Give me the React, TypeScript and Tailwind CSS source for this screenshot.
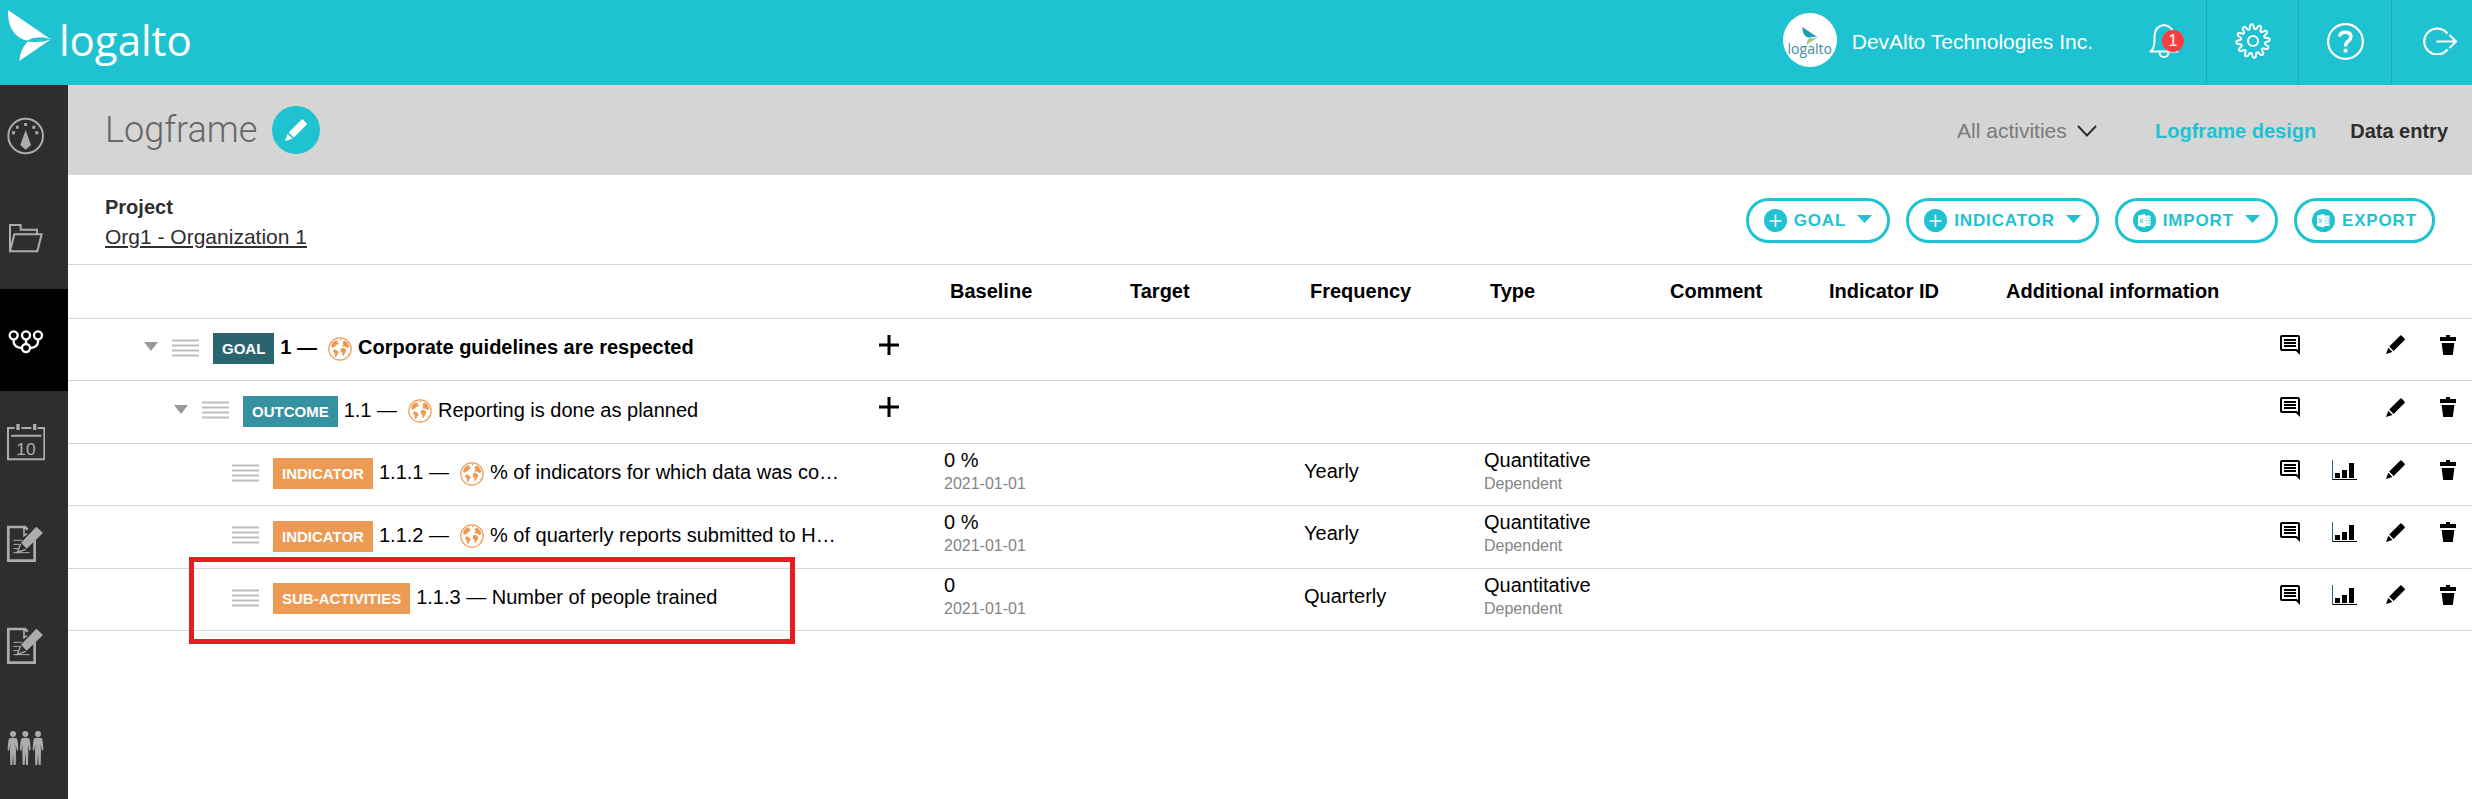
import { Fragment, type ReactNode } from 'react';

type Row = {
  level: 0 | 1 | 2;
  badge: string;
  badgeColor: string;
  code: string;
  title: string;
  global?: boolean;
  indicator?: { baseline: string; frequency: string };
  highlighted?: boolean;
};

const rows: Row[] = [
  {
    level: 0,
    badge: 'GOAL',
    badgeColor: 'bg-[#2a656f]',
    code: '1',
    title: 'Corporate guidelines are respected',
    global: true,
  },
  {
    level: 1,
    badge: 'OUTCOME',
    badgeColor: 'bg-[#3692a0]',
    code: '1.1',
    title: 'Reporting is done as planned',
    global: true,
  },
  {
    level: 2,
    badge: 'INDICATOR',
    badgeColor: 'bg-[#ed9b54]',
    code: '1.1.1',
    title: '% of indicators for which data was co…',
    global: true,
    indicator: { baseline: '0 %', frequency: 'Yearly' },
  },
  {
    level: 2,
    badge: 'INDICATOR',
    badgeColor: 'bg-[#ed9b54]',
    code: '1.1.2',
    title: '% of quarterly reports submitted to H…',
    global: true,
    indicator: { baseline: '0 %', frequency: 'Yearly' },
  },
  {
    level: 2,
    badge: 'SUB-ACTIVITIES',
    badgeColor: 'bg-[#ed9b54]',
    code: '1.1.3',
    title: 'Number of people trained',
    indicator: { baseline: '0', frequency: 'Quarterly' },
    highlighted: true,
  },
];

const indent = ['pl-[76px]', 'pl-[106px]', 'pl-[164px]'];

/* ---------- Icons ---------- */

const Bird = ({ className, top, bottom }: { className: string; top: string; bottom: string }) => (
  <svg className={className} viewBox="0 0 130 154">
    <path d="M0 0L129 88Q90 75 58 92C22 86 -2 52 0 0Z" fill={top} />
    <path d="M129 89L34 154Q37 118 60 95Q96 101 129 89Z" fill={bottom} />
  </svg>
);

const PencilIcon = ({ className }: { className: string }) => (
  <svg className={className} viewBox="0 0 19 19" fill="currentColor">
    <path d="M3.2 11.6L14.4 0.4Q15 0 15.5 0.5L18.7 3.8Q19 4.4 18.6 4.9L7.6 15.9Z" />
    <path d="M2.3 12.7L6.5 17L0 19Z" />
  </svg>
);

const TrashIcon = () => (
  <svg className="h-5 w-4" viewBox="0 0 16 20" fill="currentColor">
    <path d="M0 2H6V0H10V2H16V6H0Z" />
    <path d="M1.6 8H14.4L12.8 20H3.2Z" />
  </svg>
);

const CommentIcon = () => (
  <svg className="size-5" viewBox="2 2 20 20" fill="currentColor">
    <path d="M21.99 4c0-1.1-.89-2-1.99-2H4c-1.1 0-2 .9-2 2v12c0 1.1.9 2 2 2h14l4 4-.01-18zM20 4v13.17L18.83 16H4V4h16zM6 12h12v2H6zm0-3h12v2H6zm0-3h12v2H6z" />
  </svg>
);

const ChartIcon = () => (
  <svg className="h-5 w-[26px]" viewBox="0 0 26 20" fill="currentColor">
    <path d="M0 0H1V19H25V20H0Z" fill="#33617f" />
    <path d="M1 19H25V20H1ZM3 13H8V18H3ZM10 10H15V18H10ZM17 3H22V18H17Z" />
  </svg>
);

const PlusIcon = () => (
  <svg className="size-5" viewBox="0 0 20 20" fill="currentColor">
    <path d="M8.5 0H11.5V8.5H20V11.5H11.5V20H8.5V11.5H0V8.5H8.5Z" />
  </svg>
);

const GlobeIcon = () => (
  <svg className="size-6 shrink-0" viewBox="0 0 24 24" fill="#ed9b54">
    <circle cx="12" cy="12" r="11.2" fill="none" stroke="#ed9b54" strokeWidth="1.2" />
    <path d="M3.8 6.6L5.6 4.4L8.4 3.2L10 4.2L9 5.4L11 5.6L10.4 7.2L8.4 7.8L7.4 9.6L5.8 9.8L5 11L3 9.6Z" />
    <path d="M5.4 12.8L7.4 12.6L10.4 14.6L10.6 16L9.2 17.4L8.6 19.4L7.6 20.6L6.8 18.4L6.6 16.2L5 14.6Z" />
    <path d="M14.6 5.4L16 3.6L18.6 4.6L21 8L21.4 10.6L20.2 10.2L19.6 11.6L18.2 10L16.2 9.6L14 9.4L15.4 7.6Z" />
    <path d="M12.8 11.8L14.6 10.8L17.2 11.4L18.4 13.4L17.6 15.4L16.4 17L15.6 19L14.4 18.4L14.4 15.8L12.8 14.8Z" />
    <path d="M11.6 2L13.8 2.2L12.6 3.8ZM19.4 17L20.6 15.4L20.2 18Z" />
  </svg>
);

const Caret = ({ className }: { className: string }) => (
  <svg className={className} viewBox="0 0 14 8" preserveAspectRatio="none" fill="currentColor">
    <path d="M0 0H14L7 8Z" />
  </svg>
);

const PlusCircle = () => (
  <svg className="size-[23px]" viewBox="0 0 23 23">
    <circle cx="11.5" cy="11.5" r="11.5" fill="currentColor" />
    <path d="M11.5 5.5V18M5.5 12H17.5" stroke="#fff" strokeWidth="1.6" />
  </svg>
);

const ExcelCircle = () => (
  <svg className="size-[23px]" viewBox="0 0 23 23">
    <circle cx="11.5" cy="11.5" r="11.5" fill="currentColor" />
    <path d="M5 6.5L12 5V18.5L5 17Z" fill="#fff" />
    <path d="M12 6.5H17.5V17H12Z" fill="#fff" />
    <path d="M6.8 9.6L10 14M10 9.6L6.8 14" stroke="currentColor" strokeWidth="0.9" />
    <path d="M12.800 9H14.400M15.200 9H17M12.800 11.500H14.400M15.200 11.500H17M12.800 14H14.400M15.200 14H17" stroke="currentColor" strokeWidth="0.7" />
  </svg>
);

// Cog outline: a circle whose radius swings in and out once per tooth
const cogPath = Array.from({ length: 241 }, (_, i) => {
  const a = (i / 240) * Math.PI * 2;
  const r = 14.4 + (2.3 * Math.tanh(1.6 * Math.cos(a * 12 + 1))) / Math.tanh(1.6);
  return `${i ? 'L' : 'M'}${(18 + r * Math.cos(a)).toFixed(2)} ${(18 + r * Math.sin(a)).toFixed(2)}`;
}).join('');

const BellIcon = () => (
  <svg className="size-9" viewBox="0 0 36 36" fill="none" stroke="#fff" strokeWidth="2" strokeLinejoin="round">
    <path d="M1.5 28.5H28.5Q24.5 25 24.5 18V13Q24 3 15 2Q6 3 5.5 13V18Q5.5 25 1.5 28.5Z" />
    <path d="M10.5 29.5Q11 34 15 34Q19 34 19.5 29.5" />
  </svg>
);

const CogIcon = () => (
  <svg className="size-9" viewBox="0 0 36 36" fill="none" stroke="#fff" strokeWidth="2">
    <path d={cogPath} strokeLinejoin="round" />
    <circle cx="18" cy="18" r="5" />
  </svg>
);

const HelpIcon = () => (
  <svg className="size-[37px]" viewBox="0 0 37 37">
    <circle cx="18.5" cy="18.5" r="17.4" fill="none" stroke="#fff" strokeWidth="2.2" />
    <path d="M12.5 13.5Q13 9.2 18.5 9.2Q24 9.200 24 13.600Q24 16 21.300 18.200Q18.500 20.200 18.500 23.500" fill="none" stroke="#fff" strokeWidth="3.4" />
    <path d="M16.600 25.800H20.400V29.400H16.600Z" fill="#fff" />
  </svg>
);

const LogoutIcon = () => (
  <svg className="h-7 w-[34px]" viewBox="0 0 34 28" fill="none" stroke="#fff" strokeWidth="2.2">
    <path d="M24.5 6.5A13 13 0 1 0 24.5 22.5" />
    <path d="M13.5 14.500H33M26.500 8L33 14.500L26.500 21" />
  </svg>
);

const SideIcon = ({ children }: { children: ReactNode }) => (
  <svg className="size-[38px]" viewBox="0 0 114 114" fill="none" stroke="currentColor" strokeWidth="6">
    {children}
  </svg>
);

const reportIcon = (
  <>
    <path d="M83 46V107H4V6H54L62 14" strokeWidth="8" />
    <path d="M51 8V32L60 26" strokeWidth="5" />
    <path d="M19 46H46M19 58H38M19 71H36M19 83H68" strokeWidth="3" />
    <path d="M88 5L108 24L59 71L42 53Z" fill="currentColor" stroke="none" />
    <path d="M41 57L31 82L56 73" strokeWidth="4" />
  </>
);

const person = 'M-11 28Q0 24 11 28Q15 33 16 62L12 66L8 46L9 66L8 108H2L0 72L-2 108H-8L-9 66L-8 46L-12 66L-16 62Q-15 33 -11 28Z';

const navItems: { label: string; active?: boolean; icon: ReactNode }[] = [
  {
    label: 'Dashboard',
    icon: (
      <>
        <circle cx="56" cy="57" r="52" />
        <path d="M56 39L72 84L56 98L40 84Z" fill="currentColor" stroke="none" />
        <path d="M56 18V27M27 31L35 31M76 31H85M15 47H24M85 47H94" strokeWidth="9" />
      </>
    ),
  },
  { label: 'Projects', icon: <path d="M9 97V18H41V32H90V46M9 97L22 46H104L91 97Z" /> },
  {
    label: 'Logframe',
    active: true,
    icon: (
      <g strokeWidth="7">
        <circle cx="20" cy="43" r="12" />
        <circle cx="57" cy="43" r="12" />
        <circle cx="93" cy="43" r="12" />
        <circle cx="57" cy="81" r="12" />
        <path d="M57 55V69M20 55V64Q22 79 45 81M93 55V64Q91 79 69 81" />
      </g>
    ),
  },
  {
    label: 'Calendar',
    icon: (
      <>
        <path d="M23 15H3V109H112V15H92M43 15H73M12 38H103" />
        <path d="M33 3V21M83 3V21" strokeWidth="10" />
        <text x="57" y="96" fontSize="52" textAnchor="middle" fill="currentColor" stroke="none">
          10
        </text>
      </>
    ),
  },
  { label: 'Data collection', icon: reportIcon },
  { label: 'Reports', icon: reportIcon },
  {
    label: 'Users',
    icon: (
      <g fill="currentColor" stroke="none">
        {[18, 55, 93].map((x) => (
          <g key={x} transform={`translate(${x} 0)`}>
            <circle cx="0" cy="15" r="9" />
            <path d={person} />
          </g>
        ))}
      </g>
    ),
  },
];

/* ---------- Layout ---------- */

const TopBar = () => (
  <header className="flex h-[85px] items-stretch justify-between bg-[#1fc2d0] text-white">
    <a href="#" className="flex items-start gap-2 pl-2 pt-[10px]" aria-label="logalto">
      <Bird className="h-[51px] w-[43px]" top="#fff" bottom="#fff" />
      <span className="font-['Open_Sans',sans-serif] text-[42px] font-medium leading-[60px]">logalto</span>
    </a>
    <div className="flex">
      <div className="flex items-center gap-[15px] pb-[5px] pr-14 text-[21px]">
        <span className="flex size-[54px] flex-col items-center justify-center rounded-full bg-white pt-1">
          <Bird className="h-[18px] w-4" top="#1f9fb5" bottom="#9cc97c" />
          <span className="-mt-1 font-['Open_Sans',sans-serif] text-[14px] leading-4 text-[#3b8fa3]">logalto</span>
        </span>
        <span className="pt-[3px]">DevAlto Technologies Inc.</span>
      </div>
      <button type="button" className="relative w-[57px] pb-1" aria-label="Notifications">
        <BellIcon />
        <span className="absolute left-[13px] top-[30px] size-[22px] rounded-full bg-[#fc3d40] text-center text-[16px] leading-[22px]">1</span>
      </button>
      <button type="button" className="flex w-[92px] items-center justify-center border-l border-[#1aaab7] pb-[3px]" aria-label="Settings">
        <CogIcon />
      </button>
      <button type="button" className="flex w-[93px] items-center justify-center border-l border-[#1aaab7] pb-[2px]" aria-label="Help">
        <HelpIcon />
      </button>
      <button type="button" className="flex items-center border-l border-[#1aaab7] pb-[3px] pl-[31px] pr-[15px]" aria-label="Log out">
        <LogoutIcon />
      </button>
    </div>
  </header>
);

const SideBar = () => (
  <nav className="w-[68px] shrink-0 bg-[#2e2e2e]">
    <ul>
      {navItems.map((item) => (
        <li key={item.label}>
          <a
            href="#"
            aria-label={item.label}
            className={`flex h-[102px] items-center pl-[7px] ${
              item.active ? 'bg-black text-white' : 'text-[#acacac]'
            }`}
          >
            <SideIcon>{item.icon}</SideIcon>
          </a>
        </li>
      ))}
    </ul>
  </nav>
);

const TitleBar = () => (
  <div className="flex h-[90px] items-center justify-between bg-[#d5d5d5] pl-[37px] pr-6">
    <div className="flex items-center gap-[15px]">
      <h1 className="font-[Roboto,sans-serif] text-[36px] font-light text-[#666]">Logframe</h1>
      <button type="button" className="flex size-12 items-center justify-center rounded-full bg-[#1fc2d0] text-white" aria-label="Rename">
        <PencilIcon className="size-[22px]" />
      </button>
    </div>
    <div className="flex items-center pt-[2px]">
      <label className="flex items-center gap-[10px] pr-[58px]">
        <select aria-label="Activities" className="appearance-none bg-transparent text-[21px] text-[#7a7a7a]">
          <option>All activities</option>
        </select>
        <svg className="h-3 w-5" viewBox="0 0 20 12" fill="none" stroke="#2e2e2e" strokeWidth="2">
          <path d="M1 1L10 10.5L19 1" />
        </svg>
      </label>
      <div className="flex gap-[34px] text-[20px] font-bold">
        <a href="#" className="text-[#1fc2d0]">Logframe design</a>
        <a href="#" className="text-[#2e2e2e]">Data entry</a>
      </div>
    </div>
  </div>
);

const ActionButton = ({ icon, label, menu }: { icon: ReactNode; label: string; menu?: boolean }) => (
  <button
    type="button"
    className="flex h-[45px] items-center rounded-full border-[3px] border-[#1fc2d0] px-[15px] text-[17px] font-bold tracking-wider text-[#1fc2d0]"
  >
    {icon}
    <span className="ml-[7px]">{label}</span>
    {menu && <Caret className="mb-[3px] ml-[11px] h-2 w-[15px]" />}
  </button>
);

const ProjectBar = () => (
  <div className="flex h-[90px] items-center justify-between border-b border-[#d5d5d5] pl-[37px] pr-[37px] pt-[2px] text-[#2e2e2e]">
    <div className="pt-[2px] leading-[29px]">
      <p className="text-[20px] font-bold">Project</p>
      <a href="#" className="block text-[21px] underline">Org1 - Organization 1</a>
    </div>
    <div className="flex gap-4">
      <ActionButton icon={<PlusCircle />} label="GOAL" menu />
      <ActionButton icon={<PlusCircle />} label="INDICATOR" menu />
      <ActionButton icon={<ExcelCircle />} label="IMPORT" menu />
      <ActionButton icon={<ExcelCircle />} label="EXPORT" />
    </div>
  </div>
);

const TitleCell = ({ row }: { row: Row }) => (
  <div className={`flex items-baseline whitespace-nowrap pb-[2px] ${indent[row.level]} ${row.level === 0 ? 'font-bold' : ''}`}>
    {row.level < 2 && (
      <button type="button" aria-label="Collapse" className="mb-1 mr-[14px] self-center text-[#999]">
        <Caret className="h-[9px] w-[14px]" />
      </button>
    )}
    <svg className="mb-[2px] mr-[14px] h-[18px] w-[27px] shrink-0 self-center" viewBox="0 0 27 18" stroke="#bdbdbd" strokeWidth="2">
      <path d="M0 1.5H27M0 6.5H27M0 11.5H27M0 16.5H27" />
    </svg>
    <span className={`px-[9px] text-[15px] font-bold leading-[31px] text-white ${row.badgeColor}`}>{row.badge}</span>
    <span className="ml-[6px]">{row.code} —</span>
    {row.global ? (
      <span className="ml-[11px] mr-[6px] self-center">
        <GlobeIcon />
      </span>
    ) : (
      <Fragment>&nbsp;</Fragment>
    )}
    <span>{row.title}</span>
  </div>
);

const headers = ['Baseline', 'Target', 'Frequency', 'Type', 'Comment', 'Indicator ID', 'Additional information'];

const LogframeTable = () => (
  <table className="w-full table-fixed border-separate border-spacing-0 text-left text-[20px] leading-6 text-black [&_td]:border-b [&_td]:border-[#d5d5d5] [&_td]:p-0 [&_th]:border-b [&_th]:border-[#d5d5d5]">
    <colgroup>
      <col />
      <col className="w-[60px]" />
      <col className="w-[180px]" />
      <col className="w-[180px]" />
      <col className="w-[180px]" />
      <col className="w-[180px]" />
      <col className="w-[159px]" />
      <col className="w-[177px]" />
      <col className="w-[285px]" />
      <col className="w-[192px]" />
    </colgroup>
    <thead>
      <tr className="h-[54px]">
        <th aria-label="Title" />
        <th aria-label="Add" />
        {headers.map((header) => (
          <th key={header} className="pb-[2px] pl-[11px]">
            {header}
          </th>
        ))}
        <th aria-label="Actions" />
      </tr>
    </thead>
    <tbody>
      {rows.map((row) => (
        <tr key={row.code} className="h-[62px] even:h-[63px]">
          <td className="relative">
            <TitleCell row={row} />
            {row.highlighted && (
              <span className="pointer-events-none absolute -top-3 left-[121px] h-[87px] w-[606px] border-[5px] border-[#e81c1e]" />
            )}
          </td>
          <td>
            {!row.indicator && (
              <button type="button" aria-label="Add" className="mb-[10px] block">
                <PlusIcon />
              </button>
            )}
          </td>
          <td>
            {row.indicator && (
              <div className="pb-[6px] pl-[5px]">
                <p>{row.indicator.baseline}</p>
                <p className="text-[16px] text-[#858585]">2021-01-01</p>
              </div>
            )}
          </td>
          <td />
          <td>{row.indicator && <p className="pb-[8px] pl-[5px]">{row.indicator.frequency}</p>}</td>
          <td>
            {row.indicator && (
              <div className="pb-[6px] pl-[5px]">
                <p>Quantitative</p>
                <p className="text-[16px] text-[#858585]">Dependent</p>
              </div>
            )}
          </td>
          <td />
          <td />
          <td />
          <td>
            <div className="mb-[10px] grid grid-cols-[52px_54px_54px_16px] items-center">
              <button type="button" aria-label="Comments">
                <CommentIcon />
              </button>
              {row.indicator ? (
                <button type="button" aria-label="Chart">
                  <ChartIcon />
                </button>
              ) : (
                <span />
              )}
              <button type="button" aria-label="Edit">
                <PencilIcon className="size-[19px]" />
              </button>
              <button type="button" aria-label="Delete">
                <TrashIcon />
              </button>
            </div>
          </td>
        </tr>
      ))}
    </tbody>
  </table>
);

const App = () => (
  <div className="min-h-screen bg-white font-['Liberation_Sans',Arial,sans-serif]">
    <TopBar />
    <div className="flex">
      <SideBar />
      <main className="min-w-0 flex-1">
        <TitleBar />
        <ProjectBar />
        <LogframeTable />
      </main>
    </div>
  </div>
);

export default App;
